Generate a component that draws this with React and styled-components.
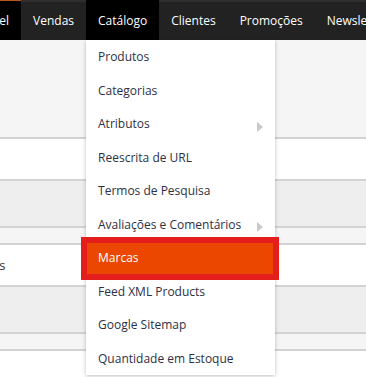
import styled, { createGlobalStyle } from 'styled-components';

const GlobalStyle = createGlobalStyle`
  html, body {
    margin: 0;
    padding: 0;
    background: #ffffff;
    overflow: hidden;
  }

  body {
    font-family: 'Open Sans', 'Noto Sans', sans-serif;
  }
`;

const navItems = [
  { label: 'Painel', active: true },
  { label: 'Vendas' },
  { label: 'Catálogo', open: true },
  { label: 'Clientes' },
  { label: 'Promoções' },
  { label: 'Newsletter' },
  { label: 'CMS' },
];

const menuItems = [
  { label: 'Produtos' },
  { label: 'Categorias' },
  { label: 'Atributos', sub: true },
  { label: 'Reescrita de URL' },
  { label: 'Termos de Pesquisa' },
  { label: 'Avaliações e Comentários', sub: true },
  { label: 'Marcas', selected: true },
  { label: 'Feed XML Products' },
  { label: 'Google Sitemap' },
  { label: 'Quantidade em Estoque' },
];

const rows = [
  { tone: 'light', height: 97 },
  { tone: 'white', height: 40 },
  { tone: 'gray', height: 45 },
  { tone: 'light', height: 15 },
  { tone: 'white', height: 40, text: 'Produtos' },
  { tone: 'gray', height: 45 },
  { tone: 'light', height: 15 },
  { tone: 'white', height: 40 },
];

const App = () => {
  return (
    <Page>
      <GlobalStyle />
      <NavBar>
        <NavList>
          {navItems.map((item) => (
            <NavItem key={item.label} $active={item.active} $open={item.open}>
              {item.label}
              {item.open && (
                <Dropdown>
                  {menuItems.map((m) => (
                    <MenuItem key={m.label} $selected={m.selected}>
                      {m.label}
                      {m.sub && <Arrow />}
                      {m.selected && <Highlight />}
                    </MenuItem>
                  ))}
                </Dropdown>
              )}
            </NavItem>
          ))}
        </NavList>
      </NavBar>
      <Content>
        {rows.map((row, i) => (
          <Row key={i} $tone={row.tone} $height={row.height}>
            {row.text && <CellText>{row.text}</CellText>}
          </Row>
        ))}
      </Content>
    </Page>
  );
};

const Page = styled.div`
  width: 366px;
  height: 377px;
  overflow: hidden;
  position: relative;
`;

const NavBar = styled.div`
  height: 40px;
  background-color: #222222;
  border-top: 2px solid #2e2e2e;
  box-sizing: border-box;
  position: relative;
  z-index: 2;
`;

const NavList = styled.ul`
  display: flex;
  list-style: none;
  margin: -2px 0 0 -37px;
  padding: 0;
  white-space: nowrap;
`;

const NavItem = styled.li`
  position: relative;
  height: 40px;
  padding: 0 12px;
  display: flex;
  align-items: center;
  box-sizing: border-box;
  font-size: 12px;
  font-weight: 400;
  color: #ffffff;
  background-color: ${({ $active, $open }) => ($active || $open ? '#000000' : 'transparent')};
  border-top: ${({ $active }) => ($active ? '1px solid #b8541e' : '0')};
`;

const Dropdown = styled.ul`
  position: absolute;
  top: 40px;
  left: 0;
  width: 189px;
  margin: 0;
  padding: 0;
  list-style: none;
  background-color: #ffffff;
  box-shadow: 0 1px 4px rgba(0, 0, 0, 0.25);
`;

const MenuItem = styled.li`
  position: relative;
  height: 33.5px;
  display: flex;
  align-items: center;
  justify-content: space-between;
  padding: 0 12px;
  font-size: 12px;
  font-weight: 400;
  color: ${({ $selected }) => ($selected ? '#ffffff' : '#2d3045')};
  background-color: ${({ $selected }) => ($selected ? '#eb4700' : 'transparent')};
`;

const Arrow = styled.span`
  margin-top: 6px;
  width: 0;
  height: 0;
  border-top: 5px solid transparent;
  border-bottom: 5px solid transparent;
  border-left: 6px solid #c9c9c9;
`;

const Highlight = styled.span`
  position: absolute;
  top: -4.5px;
  left: -5px;
  right: -4px;
  bottom: -5.5px;
  border: 6px solid #e41d1d;
  pointer-events: none;
`;

const Content = styled.div`
  display: flex;
  flex-direction: column;
`;

const toneColors = {
  light: '#f5f5f5',
  white: '#ffffff',
  gray: '#eeeeee',
};

const Row = styled.div`
  height: ${({ $height }) => $height}px;
  background-color: ${({ $tone }) => toneColors[$tone]};
  border-bottom: 2px solid #d3d3d3;
  display: flex;
  align-items: center;
  overflow: hidden;
`;

const CellText = styled.span`
  margin-left: -50px;
  font-size: 13px;
  color: #303030;
`;

export default App;
